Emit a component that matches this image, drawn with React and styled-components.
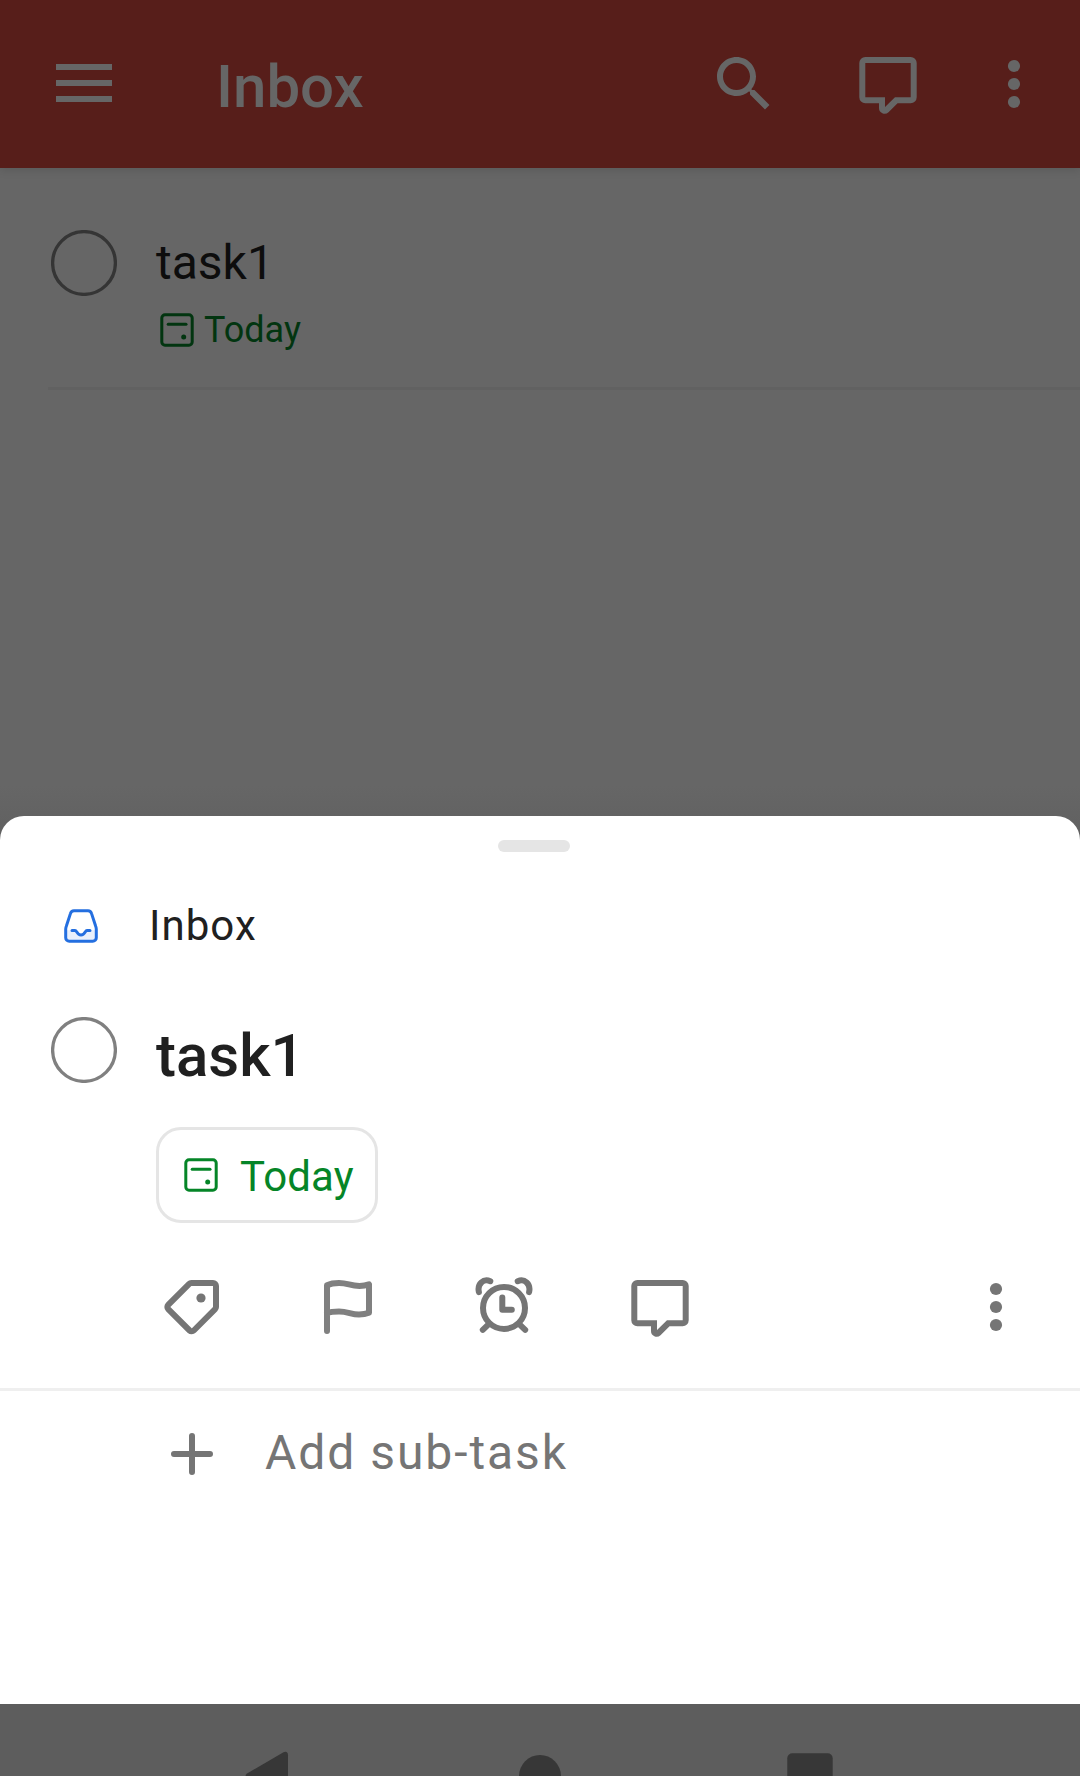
import React from "react";
import styled, { createGlobalStyle } from "styled-components";

const GlobalStyle = createGlobalStyle`
  * { box-sizing: border-box; }
  body { margin: 0; background: #666666; font-family: Roboto, "Noto Sans", sans-serif; }
`;

const Screen = styled.div`
  width: 1080px;
  height: 1776px;
  display: flex;
  flex-direction: column;
  overflow: hidden;
  background: #666666;
`;

const Toolbar = styled.header`
  height: 168px;
  flex: none;
  display: flex;
  align-items: center;
  padding: 0 30px 0 48px;
  background: #571e1a;
  color: #666666;
  box-shadow: 0 2px 9px rgba(0, 0, 0, 0.13);
`;

const Title = styled.h1`
  flex: 1;
  margin: 0 0 0 96px;
  padding-top: 5px;
  font-size: 60px;
  font-weight: 500;
  line-height: 71px;
`;

const ToolbarActions = styled.div`
  display: flex;
  gap: ${(p) => p.$gap || 0}px;
  margin-right: ${(p) => p.$end || 0}px;
`;

const Icon = styled.svg`
  display: block;
  flex: none;
  width: ${(p) => p.$size || 72}px;
  height: ${(p) => p.$size || 72}px;
  fill: none;
  stroke: currentColor;
  stroke-width: ${(p) => p.$stroke || 6};
  stroke-linecap: round;
  .solid { fill: currentColor; stroke: none; }
`;

const List = styled.main`
  height: 648px;
  flex: none;
  display: flex;
  flex-direction: column;
  justify-content: space-between;
`;

const TaskRow = styled.article`
  height: 222px;
  margin-left: 48px;
  padding: 62px 0 0 3px;
  display: flex;
  gap: 39px;
  border-bottom: 3px solid #616161;
`;

const Check = styled(Icon).attrs({ viewBox: "0 0 66 66", $size: 66, $stroke: 3.3 })`
  color: ${(p) => p.$color};
`;

const TaskBody = styled.div`
  display: flex;
  flex-direction: column;
`;

const TaskName = styled.div`
  height: 66px;
  font-size: 48px;
  line-height: 66px;
  color: #0d0d0d;
`;

const DueLine = styled.div`
  display: flex;
  align-items: center;
  gap: 10px;
  margin: 12px 0 0 4px;
  height: 44px;
  font-size: 36px;
  line-height: 44px;
  color: #023510;
`;

const SheetShade = styled.div`
  height: 30px;
  background: linear-gradient(#666666, #606060);
  margin-bottom: -24px;
  padding-bottom: 24px;
  box-sizing: content-box;
`;

const Sheet = styled.section`
  position: relative;
  height: 888px;
  flex: none;
  display: flex;
  flex-direction: column;
  background: #ffffff;
  border-radius: 24px 24px 0 0;
  color: #757575;
`;

const Handle = styled.div`
  width: 72px;
  height: 12px;
  flex: none;
  margin: 24px 0 0 498px;
  border-radius: 6px;
  background: #e5e5e5;
`;

const ProjectRow = styled.div`
  height: 60px;
  display: flex;
  align-items: center;
  margin-top: 44px;
  padding-left: 64px;
  gap: 51px;
  color: #202020;
  font-size: 42px;
  line-height: 60px;
  letter-spacing: 1.05px;
`;

const Detail = styled.div`
  display: flex;
  gap: 39px;
  margin-top: 61px;
  padding: 0 48px 0 51px;
  height: 371px;
`;

const DetailBody = styled.div`
  flex: 1;
  display: flex;
  flex-direction: column;
  align-items: flex-start;
`;

const DetailTitle = styled.h2`
  margin: 3px 0 0;
  height: 72px;
  font-size: 60px;
  font-weight: 500;
  line-height: 71px;
  color: #202020;
`;

const Chip = styled.div`
  width: 222px;
  height: 96px;
  margin-top: 35px;
  padding-left: 25px;
  display: flex;
  align-items: center;
  gap: 22px;
  border: 3px solid #e5e5e5;
  border-radius: 25px;
  color: #058527;
  font-size: 42px;
  line-height: 52px;
  letter-spacing: 0.15px;
  span { padding-top: 3px; }
`;

const ActionRow = styled.div`
  width: 100%;
  display: flex;
  justify-content: space-between;
  margin-top: 48px;
`;

const ActionGroup = styled.div`
  display: flex;
  gap: 84px;
`;

const SubTaskRow = styled.div`
  height: 129px;
  flex: none;
  display: flex;
  align-items: center;
  gap: 37px;
  padding-left: 156px;
  border-top: 3px solid #efefef;
  font-size: 48px;
  line-height: 60px;
  letter-spacing: 1.95px;
  span { padding-bottom: 3px; }
`;

const NavBar = styled.nav`
  height: 72px;
  flex: none;
  display: flex;
  justify-content: space-between;
  padding: 36px 234px 0;
  background: #5d5d5d;
  color: #373737;
`;

const CheckCircle = ({ color }) => (
  <Check $color={color}>
    <circle cx="33" cy="33" r="31.4" />
  </Check>
);

const CommentIcon = () => (
  <Icon viewBox="0 0 72 72">
    <path d="M30 52.3H13.3a3 3 0 0 1-3-3V15a3 3 0 0 1 3-3H58.7a3 3 0 0 1 3 3V49.3a3 3 0 0 1-3 3H44.2L34.4 62a2.6 2.6 0 0 1-4.4-1.9Z" />
  </Icon>
);

const MoreIcon = () => (
  <Icon viewBox="0 0 72 72">
    {[18, 36, 54].map((y) => (
      <circle key={y} className="solid" cx="36" cy={y} r="6.1" />
    ))}
  </Icon>
);

const CalendarIcon = () => (
  <Icon viewBox="0 0 34 34" $size={34} $stroke={3}>
    <rect x="1.8" y="1.8" width="30.4" height="30.4" rx="3.2" />
    <path d="M8.2 11.2H26" />
    <circle className="solid" cx="23.7" cy="24" r="2.5" />
  </Icon>
);

const InboxIcon = () => (
  <Icon viewBox="0 0 34 34" $size={34} $stroke={3} color="#246fe0">
    <path d="M2 21.3H12C14 21.3 13.5 26.3 17 26.3S20 21.3 22 21.3H32V32H2Z" fill="#e9f0fc" stroke="none" />
    <path d="M10 1.7H24a3.6 3.6 0 0 1 3.5 2.7L31.7 17.2q.6 1.6.6 3.3V28.7a3.6 3.6 0 0 1-3.6 3.6H5.3a3.6 3.6 0 0 1-3.6-3.6V20.5q0-1.7.6-3.3L6.5 4.4A3.6 3.6 0 0 1 10 1.7Z" />
    <path d="M8 21.4H11C13 21.4 12.8 26 17 26S21 21.4 23 21.4H26" />
  </Icon>
);

export default function App() {
  return (
    <>
      <GlobalStyle />
      <Screen>
        <Toolbar>
          <Icon viewBox="0 0 72 72">
            <path className="solid" d="M8 16H64V22H8ZM8 32H64V38H8ZM8 48H64V54H8Z" />
          </Icon>
          <Title>Inbox</Title>
          <ToolbarActions $gap={72} $end={54}>
            <Icon viewBox="0 0 24 24">
              <path
                className="solid"
                d="M15.5 14h-.79l-.28-.27C15.41 12.59 16 11.11 16 9.5 16 5.91 13.09 3 9.5 3S3 5.91 3 9.5 5.91 16 9.5 16c1.61 0 3.09-.59 4.23-1.57l.27.28v.79l5 4.99L20.49 19l-4.99-5zm-6 0C7.01 14 5 11.99 5 9.5S7.01 5 9.5 5 14 7.01 14 9.5 11.99 14 9.5 14z"
              />
            </Icon>
            <CommentIcon />
          </ToolbarActions>
          <MoreIcon />
        </Toolbar>

        <List>
          <TaskRow>
            <CheckCircle color="#353535" />
            <TaskBody>
              <TaskName>task1</TaskName>
              <DueLine>
                <CalendarIcon />
                <span>Today</span>
              </DueLine>
            </TaskBody>
          </TaskRow>
          <SheetShade />
        </List>

        <Sheet>
          <Handle />
          <ProjectRow>
            <InboxIcon />
            <span>Inbox</span>
          </ProjectRow>
          <Detail>
            <CheckCircle color="#808080" />
            <DetailBody>
              <DetailTitle>task1</DetailTitle>
              <Chip>
                <CalendarIcon />
                <span>Today</span>
              </Chip>
              <ActionRow>
                <ActionGroup>
                  <Icon viewBox="0 0 72 72">
                    <path d="M35.3 12H57a3 3 0 0 1 3 3V36.1a3 3 0 0 1-.9 2.1L37.8 59.5a3 3 0 0 1-4.2 0L12.2 38.1a3 3 0 0 1 0-4.2L33.2 12.9a3 3 0 0 1 2.1-.9Z" />
                    <circle className="solid" cx="45" cy="27" r="4.6" />
                  </Icon>
                  <Icon viewBox="0 0 72 72" color="#808080" strokeLinejoin="round">
                    <path d="M15 60V14.2C18 12.8 22 12 27 12C36 12 38 15 47.5 15C51 15 54 14.5 57 13.3V41.8C54 43 51 43.5 47 43.5C39 43.5 36 40.5 27 40.5C22 40.5 18 41 15 42.2" />
                  </Icon>
                  <Icon viewBox="0 0 72 72" strokeLinejoin="round">
                    <circle cx="36" cy="36.9" r="21" />
                    <path d="M34.3 26.5V38.8H43.8M20.5 53.3L14.8 58.8M51.5 53.3L57.2 58.8M10.9 21.1C9 13 15.5 7.2 22.3 10.2M61.1 21.1C63 13 56.5 7.2 49.7 10.2" />
                  </Icon>
                  <CommentIcon />
                </ActionGroup>
                <MoreIcon />
              </ActionRow>
            </DetailBody>
          </Detail>
          <SubTaskRow>
            <Icon viewBox="0 0 72 72">
              <path d="M18 36H54M36 18V54" />
            </Icon>
            <span>Add sub-task</span>
          </SubTaskRow>
        </Sheet>

        <NavBar>
          <Icon viewBox="0 0 72 72">
            <path className="solid" d="M13 33.5L49.5 12.2Q54 10.6 54 15.5V56.5Q54 61.4 49.5 59.8L13 38.5Q10 36 13 33.5Z" />
          </Icon>
          <Icon viewBox="0 0 72 72">
            <circle className="solid" cx="36" cy="36" r="21" />
          </Icon>
          <Icon viewBox="0 0 72 72">
            <rect className="solid" x="13.3" y="13.2" width="45.4" height="45.6" rx="5" />
          </Icon>
        </NavBar>
      </Screen>
    </>
  );
}
